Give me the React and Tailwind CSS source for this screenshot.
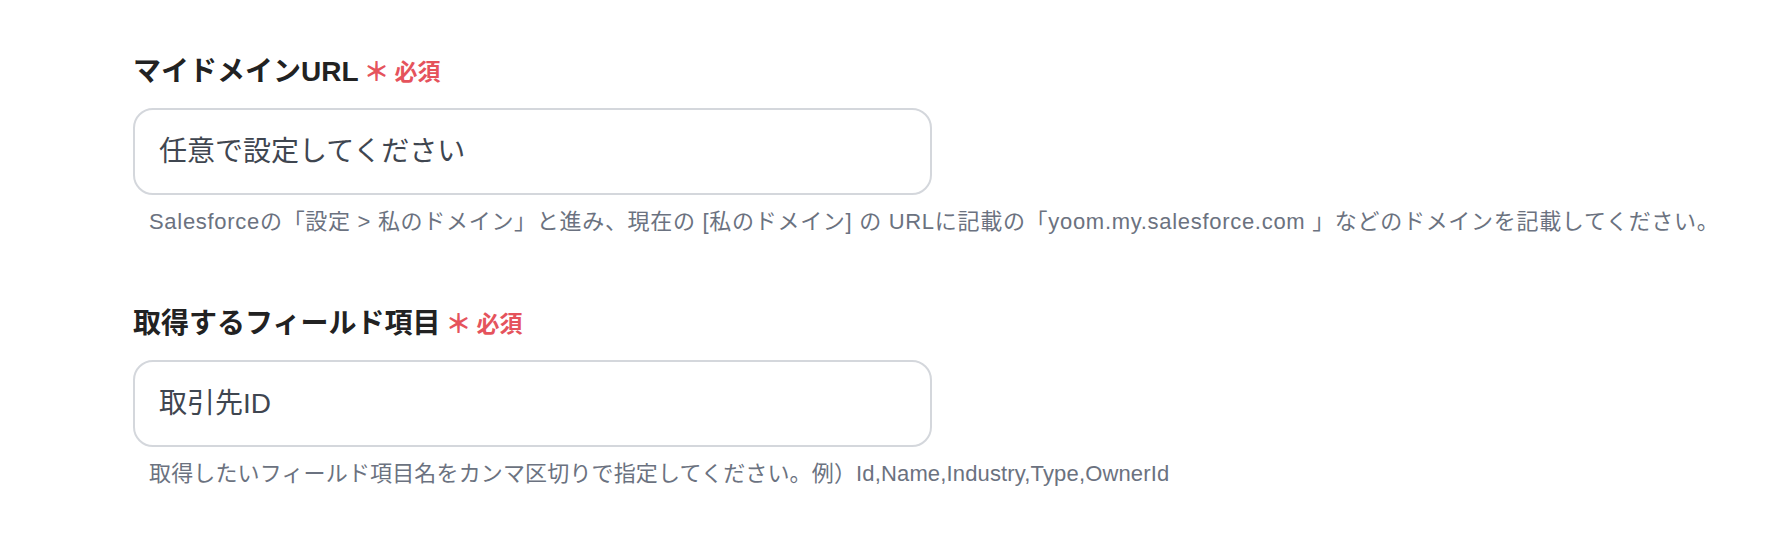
import React from 'react'

const font = { fontFamily: '"Liberation Sans", "Noto Sans CJK JP", sans-serif' }

function Required() {
  return (
    <span className="ml-[5px] flex items-center gap-[5px] text-[23px] font-bold text-[#e5535c]">
      <span className="text-[26px] leading-none">＊</span>
      <span>必須</span>
    </span>
  )
}

function Field({ label, value, help, helpClass, className }) {
  return (
    <div className={className}>
      <div className="flex h-[36px] items-center">
        <span className="text-[28px] font-bold text-[#222222]">{label}</span>
        <Required />
      </div>
      <div className="mt-[18px] flex h-[87px] w-[799px] items-center rounded-[20px] border-2 border-[#d4d7dc] bg-white pl-[24px]">
        <span className="text-[28px] text-[#3f4650]">{value}</span>
      </div>
      <p className={`mt-[10px] pl-[16px] text-[22px] leading-[33px] text-[#6b7280] ${helpClass}`}>{help}</p>
    </div>
  )
}

export default function App() {
  return (
    <div className="min-h-[540px] w-full bg-white pl-[133px] pt-[54px]" style={font}>
      <Field
        label="マイドメインURL"
        value="任意で設定してください"
        helpClass="tracking-[0.7px]"
        help="Salesforceの「設定 > 私のドメイン」と進み、現在の [私のドメイン] の URLに記載の「yoom.my.salesforce.com 」などのドメインを記載してください。"
      />
      <Field
        className="mt-[68px]"
        label="取得するフィールド項目"
        value="取引先ID"
        helpClass="tracking-[0.15px]"
        help="取得したいフィールド項目名をカンマ区切りで指定してください。例）Id,Name,Industry,Type,OwnerId"
      />
    </div>
  )
}
